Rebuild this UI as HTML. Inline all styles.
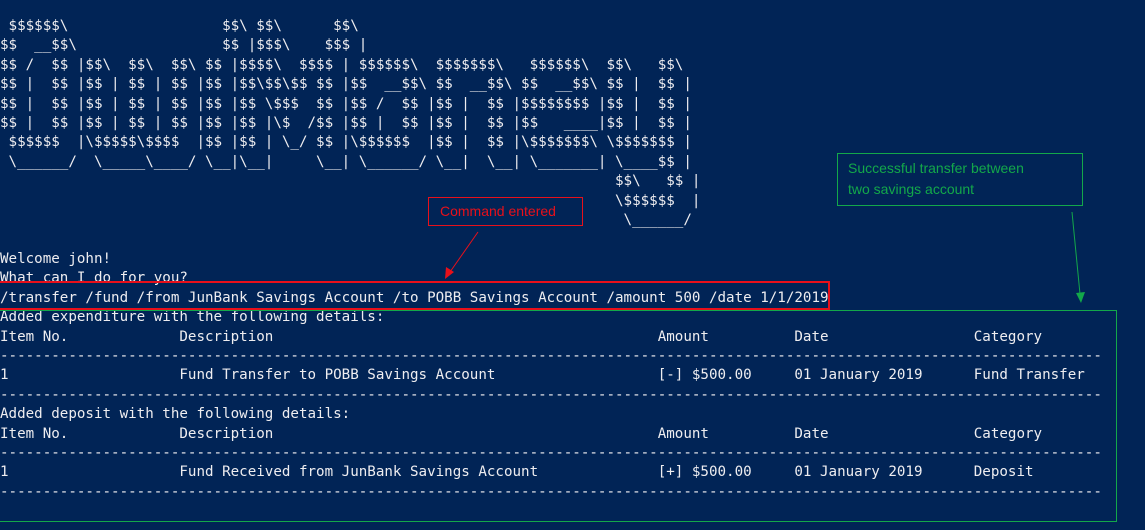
<!DOCTYPE html>
<html><head><meta charset="utf-8"><style>
html,body{margin:0;padding:0;width:1145px;height:530px;overflow:hidden;background:#012456;}
pre{position:absolute;left:0;top:17px;margin:0;font-family:"DejaVu Sans Mono","Liberation Mono",monospace;font-size:14.2px;line-height:19.4px;color:#eeedf0;white-space:pre;}
.box{position:absolute;box-sizing:border-box;}
.lbl{font-family:"Liberation Sans",sans-serif;font-size:14px;line-height:21px;}
svg{position:absolute;left:0;top:0;}
</style></head><body>
<pre> $$$$$$\                  $$\ $$\      $$\
$$  __$$\                 $$ |$$$\    $$$ |
$$ /  $$ |$$\  $$\  $$\ $$ |$$$$\  $$$$ | $$$$$$\  $$$$$$$\   $$$$$$\  $$\   $$\
$$ |  $$ |$$ | $$ | $$ |$$ |$$\$$\$$ $$ |$$  __$$\ $$  __$$\ $$  __$$\ $$ |  $$ |
$$ |  $$ |$$ | $$ | $$ |$$ |$$ \$$$  $$ |$$ /  $$ |$$ |  $$ |$$$$$$$$ |$$ |  $$ |
$$ |  $$ |$$ | $$ | $$ |$$ |$$ |\$  /$$ |$$ |  $$ |$$ |  $$ |$$   ____|$$ |  $$ |
 $$$$$$  |\$$$$$\$$$$  |$$ |$$ | \_/ $$ |\$$$$$$  |$$ |  $$ |\$$$$$$$\ \$$$$$$$ |
 \______/  \_____\____/ \__|\__|     \__| \______/ \__|  \__| \_______| \____$$ |
                                                                        $$\   $$ |
                                                                        \$$$$$$  |
                                                                         \______/

Welcome john!
What can I do for you?
/transfer /fund /from JunBank Savings Account /to POBB Savings Account /amount 500 /date 1/1/2019
Added expenditure with the following details:
Item No.             Description                                             Amount          Date                 Category
---------------------------------------------------------------------------------------------------------------------------------
1                    Fund Transfer to POBB Savings Account                   [-] $500.00     01 January 2019      Fund Transfer
---------------------------------------------------------------------------------------------------------------------------------
Added deposit with the following details:
Item No.             Description                                             Amount          Date                 Category
---------------------------------------------------------------------------------------------------------------------------------
1                    Fund Received from JunBank Savings Account              [+] $500.00     01 January 2019      Deposit
---------------------------------------------------------------------------------------------------------------------------------</pre>
<div class="box lbl" style="left:428px;top:197px;width:155px;height:29px;border:1px solid #e8101a;color:#e8101a;padding:3px 0 0 11px;">Command entered</div>
<div class="box" style="left:-2px;top:281px;width:832px;height:29px;border:2px solid #e8101a;"></div>
<div class="box lbl" style="left:837px;top:153px;width:246px;height:53px;border:1px solid #13a84a;color:#13a84a;padding:4px 0 0 10px;">Successful transfer between<br>two savings account</div>
<div class="box" style="left:-2px;top:310px;width:1119px;height:212px;border:1px solid #13a84a;"></div>
<svg width="1145" height="530">
<line x1="478" y1="232" x2="450" y2="272" stroke="#e8101a" stroke-width="1"/>
<polygon points="445,279 446,267 454,272" fill="#e8101a"/>
<line x1="1072" y1="212" x2="1080" y2="294" stroke="#13a84a" stroke-width="1"/>
<polygon points="1081,303 1076,293 1085,292" fill="#13a84a"/>
</svg>
</body></html>
